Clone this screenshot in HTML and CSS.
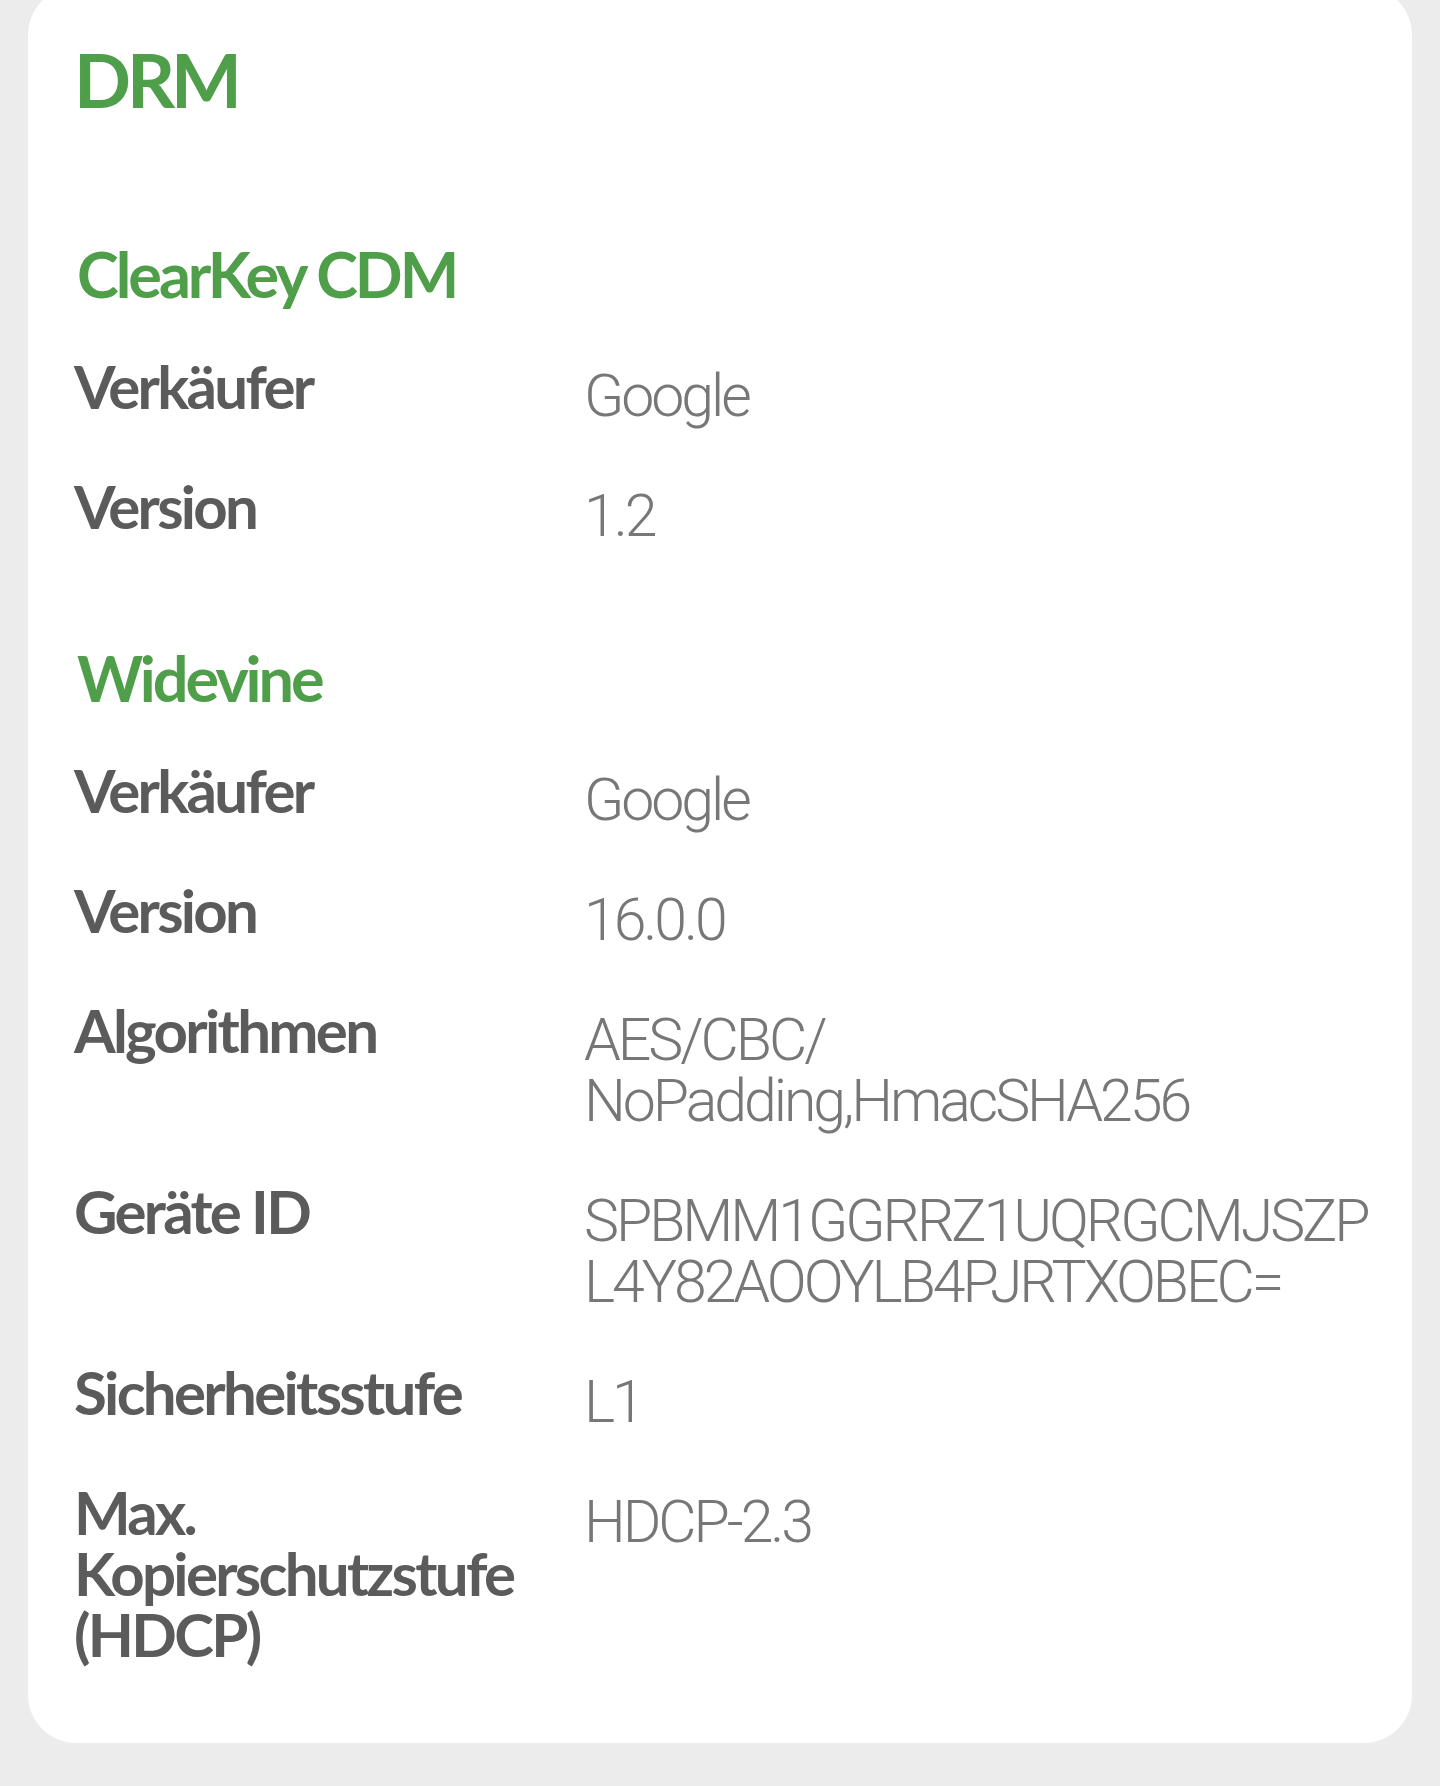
FILE: index.html
```html
<!DOCTYPE html>
<html lang="de">

<head>
    <meta charset="UTF-8">
    <meta
        name="viewport"
        content="width=device-width, initial-scale=1.0"
    >
    <link rel="stylesheet" href="styles.css">
    <title>DRM</title>
</head>

<body>
    <div class="page">
        <div class="card">
            <h1 class="card-title">DRM</h1>

            <section class="drm-section">
                <h2 class="section-title">ClearKey CDM</h2>
                <div class="info-list">
                    <div class="info-row">
                        <span class="info-label">Verkäufer</span>
                        <span class="info-value">Google</span>
                    </div>
                    <div class="info-row">
                        <span class="info-label">Version</span>
                        <span class="info-value">1.2</span>
                    </div>
                </div>
            </section>

            <section class="drm-section">
                <h2 class="section-title">Widevine</h2>
                <div class="info-list">
                    <div class="info-row">
                        <span class="info-label">Verkäufer</span>
                        <span class="info-value">Google</span>
                    </div>
                    <div class="info-row">
                        <span class="info-label">Version</span>
                        <span class="info-value">16.0.0</span>
                    </div>
                    <div class="info-row">
                        <span class="info-label">Algorithmen</span>
                        <span class="info-value">AES/CBC/<wbr>NoPadding,HmacSHA256</span>
                    </div>
                    <div class="info-row">
                        <span class="info-label">Geräte ID</span>
                        <span class="info-value">SPBMM1GGRRZ1UQRGCMJSZP<wbr>L4Y82AOOYLB4PJRTXOBEC=</span>
                    </div>
                    <div class="info-row">
                        <span class="info-label">Sicherheitsstufe</span>
                        <span class="info-value">L1</span>
                    </div>
                    <div class="info-row">
                        <span class="info-label">Max. Kopierschutzstufe (HDCP)</span>
                        <span class="info-value">HDCP-2.3</span>
                    </div>
                </div>
            </section>
        </div>
    </div>
</body>

</html>
```

FILE: styles.css
```css
body {
    margin: 0;
    background-color: #ececec;
    font-family: "Lato", "Noto Sans", sans-serif;
}

.page {
    padding: 0 28px 43px;
}

.card {
    margin-top: -13px;
    padding: 55px 28px 78px 46px;
    background-color: #ffffff;
    border-radius: 48px;
}

.card-title {
    margin: 0 0 125px;
    font-size: 75px;
    line-height: 75px;
    font-weight: 700;
    letter-spacing: -0.055em;
    color: #4f9e4a;
}

.drm-section + .drm-section {
    margin-top: 100px;
}

.section-title {
    margin: 0 0 51px;
    padding-left: 3px;
    font-size: 63px;
    line-height: 63px;
    font-weight: 700;
    letter-spacing: -0.048em;
    color: #4f9e4a;
}

.info-list {
    display: flex;
    flex-direction: column;
    gap: 50px;
}

.info-row {
    display: grid;
    grid-template-columns: 440px 1fr;
    column-gap: 70px;
    align-items: start;
}

.info-label {
    font-size: 60px;
    line-height: 61px;
    font-weight: 700;
    letter-spacing: -0.045em;
    color: #5b5b5b;
}

.info-value {
    padding-top: 9px;
    font-family: "Roboto", "Liberation Sans", sans-serif;
    font-size: 59px;
    line-height: 61px;
    font-weight: 300;
    letter-spacing: -0.052em;
    color: #777777;
    overflow-wrap: anywhere;
}
```
